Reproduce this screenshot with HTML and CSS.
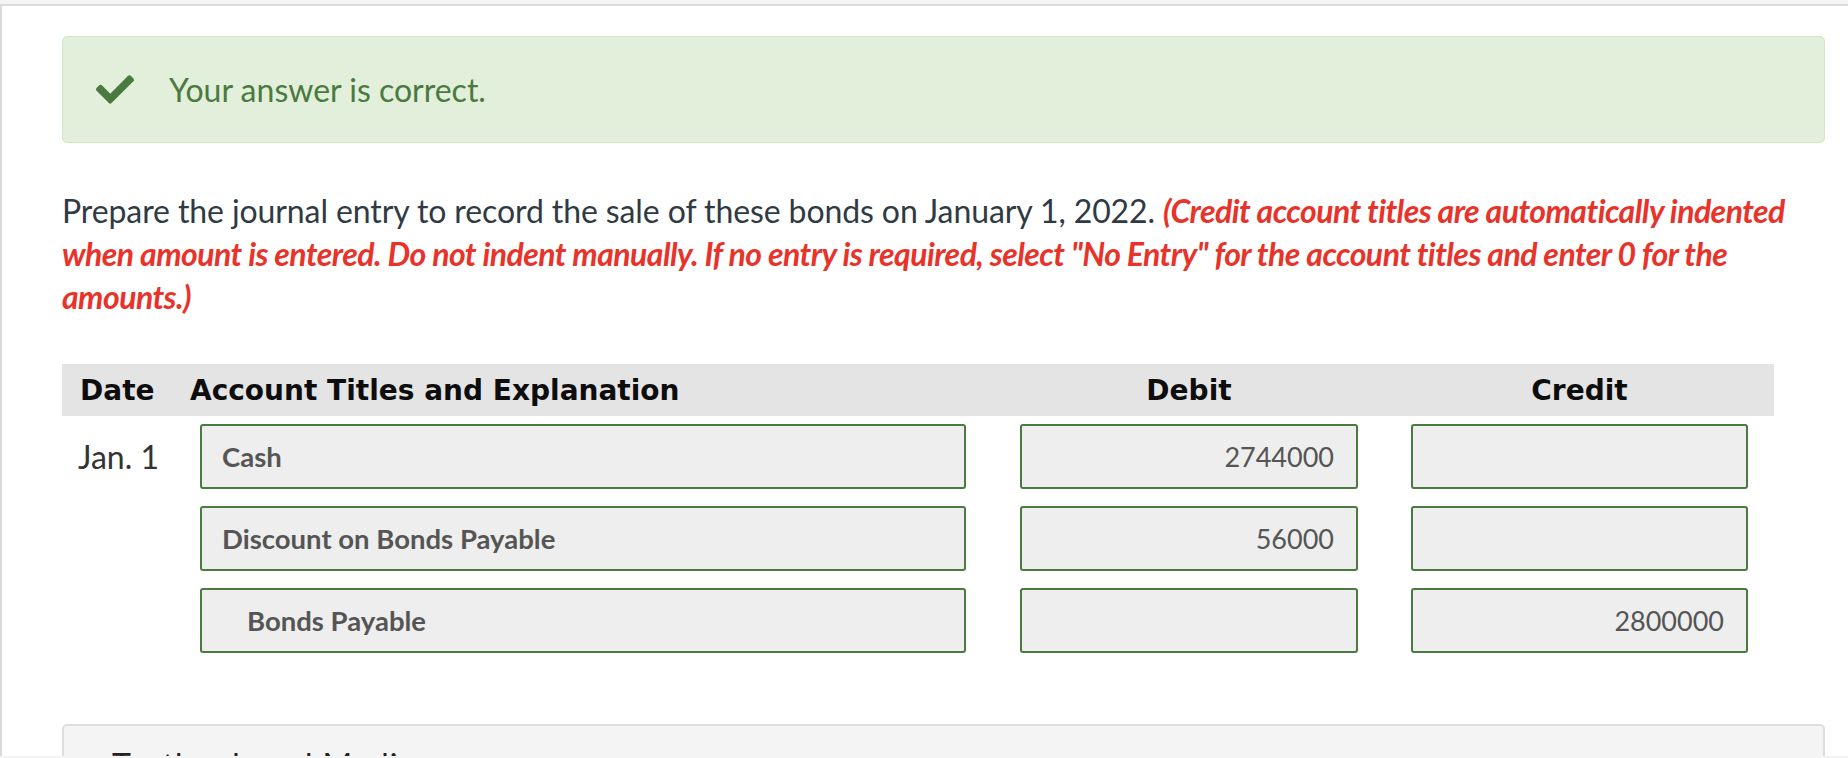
FILE: index.html
```html
<!DOCTYPE html>
<html lang="en">
<head>
<meta charset="utf-8">
<title>Journal Entry</title>
<link rel="stylesheet" href="styles.css">
</head>
<body>
<div class="page">
  <div class="alert">
    <svg class="check" viewBox="0 65 512 383" aria-hidden="true"><path d="M173.898 439.404l-166.4-166.4c-9.997-9.997-9.997-26.206 0-36.204l36.203-36.204c9.997-9.998 26.207-9.998 36.204 0L192 312.69 432.095 72.596c9.997-9.997 26.207-9.997 36.204 0l36.203 36.204c9.997 9.997 9.997 26.206 0 36.204l-294.4 294.401c-9.998 9.997-26.207 9.997-36.204-.001z"/></svg>
    <span class="alert-text">Your answer is correct.</span>
  </div>

  <p class="prompt">Prepare the journal entry to record the sale of these bonds on January 1, 2022. <em class="note">(Credit account titles are automatically indented when amount is entered. Do not indent manually. If no entry is required, select "No Entry" for the account titles and enter 0 for the amounts.)</em></p>

  <div class="journal">
    <div class="jhead">
      <div class="h-date">Date</div>
      <div class="h-acct">Account Titles and Explanation</div>
      <div class="h-num debit">Debit</div>
      <div class="h-num credit">Credit</div>
    </div>
    <div class="jrow">
      <div class="date">Jan. 1</div>
      <div class="field acct">Cash</div>
      <div class="field num debit">2744000</div>
      <div class="field num credit"></div>
    </div>
    <div class="jrow">
      <div class="date"></div>
      <div class="field acct">Discount on Bonds Payable</div>
      <div class="field num debit">56000</div>
      <div class="field num credit"></div>
    </div>
    <div class="jrow">
      <div class="date"></div>
      <div class="field acct indent">Bonds Payable</div>
      <div class="field num debit"></div>
      <div class="field num credit">2800000</div>
    </div>
  </div>

  <div class="media">
    <h3 class="media-title">Textbook and Media</h3>
  </div>
</div>
</body>
</html>
```

FILE: styles.css
```css
html, body {
  margin: 0;
  padding: 0;
  height: 100%;
  overflow: hidden;
}
body {
  background: #f4f4f4;
  font-family: Lato, "Open Sans", "Liberation Sans", sans-serif;
}
.page {
  margin-top: 4px;
  border-top: 2px solid #dadada;
  border-left: 2px solid #dadada;
  background: #ffffff;
  height: calc(100% - 6px);
  box-sizing: border-box;
  overflow: hidden;
  padding: 30px 23px 0 60px;
}
.alert {
  height: 107px;
  box-sizing: border-box;
  background: #e2efda;
  border: 1px solid #d3e5c5;
  border-radius: 5px;
  display: flex;
  align-items: center;
  padding-left: 33px;
  gap: 35px;
}
.check {
  width: 38px;
  height: 29px;
  fill: #4a7a40;
  flex: none;
}
.alert-text {
  font-size: 32px;
  color: #4a7a40;
}
.prompt {
  margin: 46px 0 0;
  font-size: 32px;
  line-height: 43px;
  letter-spacing: -0.1px;
  color: #2f3a44;
}
.note {
  color: #e8332a;
  font-weight: 700;
  font-style: italic;
  letter-spacing: -0.55px;
}
.journal {
  margin-top: 46px;
  display: flex;
  flex-direction: column;
  gap: 17px;
}
.jhead {
  height: 52px;
  width: 1712px;
  box-sizing: border-box;
  background: #e4e4e4;
  display: flex;
  align-items: center;
  padding: 0 26px 0 18px;
  font-family: "DejaVu Sans", Verdana, sans-serif;
  font-weight: 700;
  font-size: 28px;
  color: #0d0d0d;
  margin-bottom: -9px;
}
.h-date { width: 110px; flex: none; }
.h-acct { width: 776px; flex: none; }
.h-num { text-align: center; flex: none; }
.jrow {
  display: flex;
  align-items: center;
}
.date {
  width: 138px;
  flex: none;
  padding-left: 16px;
  box-sizing: border-box;
  font-size: 32px;
  color: #333;
}
.field {
  height: 65px;
  box-sizing: border-box;
  background: #eeeeee;
  border: 2px solid #4b7a40;
  border-radius: 3px;
  display: flex;
  align-items: center;
  flex: none;
  font-size: 27px;
  color: #555;
}
.acct {
  width: 766px;
  padding-left: 20px;
  font-size: 27.5px;
  font-weight: 700;
}
.acct.indent {
  padding-left: 45px;
}
.debit {
  width: 338px;
  margin-left: 54px;
}
.credit {
  width: 337px;
  margin-left: 53px;
}
.num {
  justify-content: flex-end;
  padding-right: 22px;
}
.media {
  margin-top: 71px;
  height: 80px;
  background: #f4f4f4;
  border: 2px solid #dedede;
  border-radius: 5px;
  padding: 19px 0 0 48px;
}
.media-title {
  margin: 0;
  font-size: 32px;
  font-weight: 400;
  color: #222;
  letter-spacing: 1px;
}
```
